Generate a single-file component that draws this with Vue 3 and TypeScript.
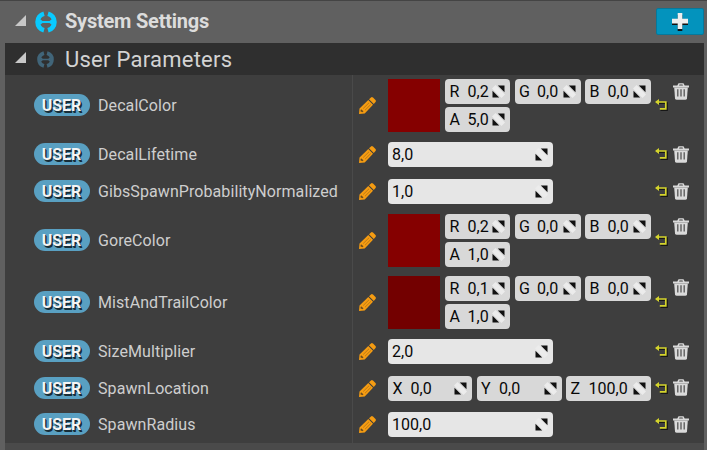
<script setup lang="ts">
interface Field { label?: string; value: string }
interface Row { name: string; kind: 'color' | 'scalar' | 'vector'; height: number; fields: Field[]; tone?: string }

const rgba = (r: string, a: string): Field[] => [
  { label: 'R', value: r }, { label: 'G', value: '0,0' }, { label: 'B', value: '0,0' }, { label: 'A', value: a },
]
const rows: Row[] = [
  { name: 'DecalColor', kind: 'color', height: 61, tone: '#850000', fields: rgba('0,2', '5,0') },
  { name: 'DecalLifetime', kind: 'scalar', height: 37, fields: [{ value: '8,0' }] },
  { name: 'GibsSpawnProbabilityNormalized', kind: 'scalar', height: 37, fields: [{ value: '1,0' }] },
  { name: 'GoreColor', kind: 'color', height: 61, tone: '#850000', fields: rgba('0,2', '1,0') },
  { name: 'MistAndTrailColor', kind: 'color', height: 62, tone: '#730000', fields: rgba('0,1', '1,0') },
  { name: 'SizeMultiplier', kind: 'scalar', height: 37, fields: [{ value: '2,0' }] },
  { name: 'SpawnLocation', kind: 'vector', height: 36, fields: [{ label: 'X', value: '0,0' }, { label: 'Y', value: '0,0' }, { label: 'Z', value: '100,0' }] },
  { name: 'SpawnRadius', kind: 'scalar', height: 37, fields: [{ value: '100,0' }] },
]
</script>

<template>
  <div class="window">
    <header class="system">
      <svg class="arrow" viewBox="0 0 11 11"><path d="M11 0V11H0Z" /></svg>
      <svg class="logo" viewBox="0 0 22 22">
        <path class="ring" d="M9 2.7A8.6 8.6 0 0 0 9 19.3M13 2.7A8.6 8.6 0 0 1 13 19.3" />
        <path d="M4 8.5H5.5L7.5 9.9H14.5L16.5 8.5H18V13.5H16.5L14.5 12.1H7.5L5.5 13.5H4Z" />
      </svg>
      <h1>System Settings</h1>
      <button class="add" aria-label="Add">
        <svg viewBox="0 0 16 18"><path class="dark" d="M5.7 2H10.3V7.5H16V12H10.3V18H5.7V12H0V7.5H5.7Z" /><path d="M5.7 0H10.3V5.8H16V10.4H10.3V16H5.7V10.4H0V5.8H5.7Z" /></svg>
      </button>
    </header>
    <main class="panel">
      <div class="heading">
        <svg class="arrow" viewBox="0 0 11 11"><path d="M11 0V11H0Z" /></svg>
        <svg class="logo small" viewBox="0 0 22 22">
          <path class="ring" d="M9 2.7A8.6 8.6 0 0 0 9 19.3M13 2.7A8.6 8.6 0 0 1 13 19.3" />
          <path d="M4 8.5H5.5L7.5 9.9H14.5L16.5 8.5H18V13.5H16.5L14.5 12.1H7.5L5.5 13.5H4Z" />
        </svg>
        <h2>User Parameters</h2>
      </div>
      <div v-for="row in rows" :key="row.name" class="row" :class="row.kind" :style="{ height: row.height + 'px' }">
        <div class="name"><span class="badge">USER</span><span class="label">{{ row.name }}</span></div>
        <div class="value">
          <svg class="pencil" viewBox="0 0 17 17">
            <path d="M0 17L.5 11.5L9.3 2.9L14 7.7L5.7 16.5ZM10 2.2L12 .4Q13 -.4 14 .6L16.5 3Q17.3 4 16.5 5L14.8 7Z" />
            <path class="groove" d="M4.2 11.5L10 5.8M6 13.2L11.8 7.5" /><path class="lead" d="M2 12.3L4.5 14.2L3.4 15.2L1.4 14.2Z" />
          </svg>
          <div v-if="row.tone" class="swatch" :style="{ background: row.tone }"></div>
          <div class="fields">
            <div v-for="(field, i) in row.fields" :key="i" class="field">
              <span v-if="field.label" class="axis">{{ field.label }}</span>
              <span class="number">{{ field.value }}</span>
              <svg class="spin" viewBox="0 0 13 13"><path class="gloss" d="M0 3.5L3.5 0L13 9.5L9.5 13Z" /><path d="M5.8 .5H12.5V7.2ZM.5 5.8L7.2 12.5H.5Z" /></svg>
            </div>
          </div>
        </div>
        <svg class="reset" viewBox="0 0 13 12">
          <path class="shade" d="M3 4.2H12V11.2H5.5" /><path d="M1 3H10.8V9.8H4.8" /><path class="tip" d="M0 3L4 0V6Z" />
        </svg>
        <svg class="trash" viewBox="0 0 16 17">
          <path d="M0 2.6H4.3L5.5 .3H10.5L11.7 2.6H16V4.6H0ZM6 2.6H10L9.5 1.6H6.5Z" fill-rule="evenodd" />
          <path d="M1.2 4.6H14.8L14 15.2Q13.8 16.8 12.2 16.8H3.8Q2.2 16.8 2 15.2Z" />
          <path class="slots" d="M4.8 6.3V13.6M8 6.3V13.6M11.2 6.3V13.6" />
        </svg>
      </div>
    </main>
  </div>
</template>

<style>
body { margin: 0; background: #4a4a4a; }
</style>
<style scoped>
.window { box-sizing: border-box; width: 707px; height: 450px; overflow: hidden; background: #606060; border-top: 1px solid #444; font-family: Roboto, sans-serif; }
.system { display: flex; align-items: center; height: 42px; padding: 0 3px 2px 15px; box-sizing: border-box; }
.arrow { width: 11px; height: 11px; fill: #c8c8c8; flex: none; margin-top: -3px; }
.system .arrow { margin-top: -1px; }
.logo { width: 22px; height: 22px; margin: 2px 0 0 9px; fill: #08caff; flex: none; overflow: visible; }
.ring { fill: none; stroke: #08caff; stroke-width: 4.8; }
h1 { margin: 0 0 0 8px; font-size: 20px; line-height: 24px; font-weight: 700; color: #dcdcdc; letter-spacing: -.22px; white-space: nowrap; }
.add { display: grid; place-items: center; box-sizing: border-box; width: 48px; height: 27px; margin: 1px 0 0 auto; padding: 0; background: #0393bd; border: 1px solid #07789a; border-radius: 2px; }
.add svg { width: 16px; height: 18px; fill: #eee; }
.add .dark { fill: #111; }
.panel { width: 699px; height: 400px; margin-left: 5px; background: #3e3e3e; box-shadow: 0 7px #4a4a4a; }
.heading { display: flex; align-items: center; height: 32px; padding-left: 10px; background: #2f2f2f; }
.small { width: 17px; height: 17px; margin: 0 0 0 11px; fill: #416579; }
.small .ring { stroke: #416579; }
h2 { margin: 2px 0 0 11px; font-size: 22px; line-height: 26px; font-weight: 400; color: #d3d3d3; letter-spacing: .25px; white-space: nowrap; }
.row { display: flex; align-items: center; }
.name { display: flex; align-items: center; align-self: stretch; box-sizing: border-box; width: 348px; padding-left: 29px; border-right: 1px solid #4a4a4a; }
.badge { width: 55px; height: 22px; padding-right: 1px; margin-top: -1px; border-radius: 11px; background: #59a0c2; color: #f4f4f4; font-size: 16px; line-height: 23px; font-weight: 700; text-align: center; text-shadow: 1px 1px #172d38, 1.5px 1.5px #172d38; }
.label { margin-left: 8px; color: #cecece; font-size: 16px; letter-spacing: .08px; }
.value { display: flex; align-items: center; width: 298px; padding-left: 5px; box-sizing: border-box; align-self: stretch; }
.pencil { width: 17px; height: 17px; flex: none; margin: 0 12px 0 1px; fill: #f59c12; }
.groove { fill: none; stroke: #a66b12; stroke-width: .7; }
.lead { fill: #694b20; }
.swatch { width: 52px; height: 53px; margin-right: 5px; flex: none; }
.fields { display: grid; }
.color .fields { grid-template-columns: 65px 66px 66px; column-gap: 4.5px; row-gap: 3px; }
.vector .fields { grid-template-columns: 84px 85px 85px; column-gap: 4.5px; }
.scalar .fields { grid-template-columns: 165px; }
.field { display: flex; align-items: center; box-sizing: border-box; height: 25px; padding: 0 5px 0 4.5px; background: #d8d8d8; border-radius: 4px; color: #080808; font-size: 16px; line-height: 25px; white-space: nowrap; }
.scalar .field { background: #e6e6e6; padding-left: 4px; }
.axis { width: 18px; flex: none; }
.number { flex: 1; }
.spin { width: 13px; height: 13px; flex: none; fill: #111; }
.gloss { fill: #ececec; }
.reset { width: 13px; height: 12px; margin: -1px 0 0 4px; flex: none; fill: none; stroke: #d4d42c; stroke-width: 1.7; }
.reset .shade { stroke: #171717; }
.reset .tip { fill: #d4d42c; stroke: none; }
.trash { width: 16px; height: 17px; margin: -1px 0 0 5px; flex: none; fill: #dadada; }
.slots { fill: none; stroke: #555; stroke-width: 1.3; }
.color .trash { align-self: flex-start; margin-top: 8px; }
</style>
